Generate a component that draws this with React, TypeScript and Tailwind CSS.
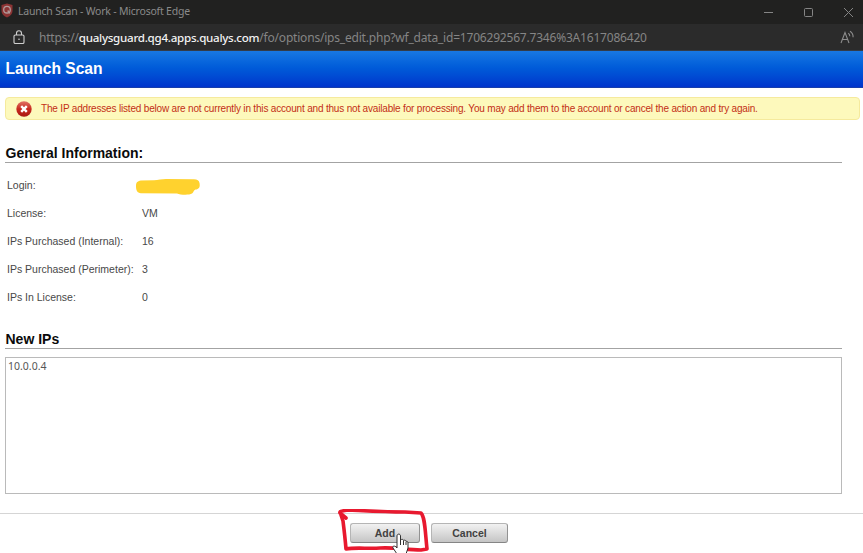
const rows = [
  { label: "Login:", value: "" },
  { label: "License:", value: "VM" },
  { label: "IPs Purchased (Internal):", value: "16" },
  { label: "IPs Purchased (Perimeter):", value: "3" },
  { label: "IPs In License:", value: "0" },
];

function TitleBar() {
  return (
    <div className="flex h-6 items-center bg-[#212120] pb-px font-['Noto_Sans',sans-serif] text-[#8a8a8a]">
      <svg className="mb-0.5 ml-px h-[15px] w-3 shrink-0" viewBox="0 0 12 15" fill="none">
        <path d="M6 .5 11.500 2V8c0 2.900-2 5.100-5.500 6.500C2.500 13.100.5 10.900.5 8V2Z" fill="#8c3434" />
        <circle cx="6" cy="6.700" r="3.300" stroke="#b09a9a" strokeWidth="1.300" />
        <path d="m6.700 7.500 2 2.800" stroke="#b09a9a" strokeWidth="1.300" />
      </svg>
      <span className="ml-[5px] whitespace-nowrap text-[10.500px] leading-none tracking-[-0.21px]">
        Launch Scan - Work - Microsoft Edge
      </span>
      <svg className="ml-auto h-3 w-[92px] shrink-0" viewBox="0 0 92 12" fill="none" stroke="#858585">
        <path d="M1 6.500h9" />
        <rect x="41.500" y="2.500" width="8" height="8" rx="1" />
        <path d="m81 2 9 9M90 2l-9 9" />
      </svg>
      <span className="w-2 shrink-0" />
    </div>
  );
}

function AddressBar() {
  return (
    <div className="flex h-[27px] items-center border-b border-[#333c49] bg-[#2b2b2b] font-['Noto_Sans',sans-serif] text-[#858585]">
      <svg className="ml-[13px] h-[15px] w-3 shrink-0" viewBox="0 0 12 15" fill="none" stroke="#d0d0d0" strokeWidth="1.100">
        <rect x="1" y="5" width="10" height="8.500" rx="1.300" />
        <path d="M3.500 5V3.300a2.500 2.500 0 0 1 5 0V5" />
        <circle cx="6" cy="9.300" r=".8" fill="#d0d0d0" stroke="none" />
      </svg>
      <span className="ml-[14px] pt-px whitespace-nowrap text-[12px] leading-none tracking-[-0.2px]">
        https://
        <span className="text-[11.600px] font-medium tracking-[-0.27px] text-[#f2f2f2]">
          qualysguard.qg4.apps.qualys.com
        </span>
        /fo/options/ips_edit.php?wf_data_id=1706292567.7346%3A1617086420
      </span>
      <svg className="mr-2 ml-auto h-[15px] w-[15px] shrink-0" viewBox="0 0 15 15" fill="none" stroke="#8d8d8d" strokeWidth="1.100">
        <path d="m1 13 4-10.500L9 13M2.500 9.500h5" />
        <path d="M8.300 3.300c1 .7 1.500 1.800 1.500 3M10 1.200c2.300 1.500 3.200 3.500 3.100 6" />
      </svg>
    </div>
  );
}

function Alert() {
  return (
    <div className="mt-[9px] mr-[3px] ml-[5px] flex h-[23px] items-center rounded-[4px] border border-[#f5ea9d] bg-[#fdf9bc]">
      <svg className="ml-2.5 h-4 w-4 shrink-0" viewBox="0 0 16 16">
        <defs>
          <linearGradient id="error" x1="0" y1="0" x2="0" y2="1">
            <stop stopColor="#e17466" />
            <stop offset=".5" stopColor="#c8291e" />
            <stop offset="1" stopColor="#a91812" />
          </linearGradient>
        </defs>
        <circle cx="8" cy="8" r="7.700" fill="url(#error)" />
        <path d="m5.200 5.200 5.600 5.600m0-5.600-5.600 5.600" stroke="#fff" strokeWidth="2.400" />
      </svg>
      <span className="ml-[9px] whitespace-nowrap text-[10px] leading-none tracking-[-0.181px] text-[#c32f16]">
        The IP addresses listed below are not currently in this account and thus not available for processing. You may
        add them to the account or cancel the action and try again.
      </span>
    </div>
  );
}

function Heading({ children }: { children: string }) {
  return (
    <h2 className="mr-[21px] ml-[5px] h-[18px] border-b border-[#a3a3a3] pl-[0.5px] text-[14px] leading-[17px] font-bold text-[#0b0b0b]">
      {children}
    </h2>
  );
}

const buttonClass =
  "h-5 rounded-[3px] border border-[#b5b5b5] border-r-[#929292] border-b-[#858585] bg-linear-to-b from-[#f2f2f2] to-[#c5c5c5] text-[10.500px] leading-none font-bold text-[#424242]";

export default function App() {
  return (
    <div className="flex h-[553px] w-[863px] flex-col overflow-hidden bg-white font-['Liberation_Sans',Arial,sans-serif]">
      <TitleBar />
      <AddressBar />
      <h1 className="h-[37px] border-b border-[#183eab] bg-linear-to-b from-[#1978e3] to-[#0034cc] pl-[5.500px] text-[15.600px] leading-[35px] font-bold text-white">
        Launch Scan
      </h1>
      <Alert />
      <div className="h-[25px]" />
      <Heading>General Information:</Heading>
      <dl className="mt-[9px] ml-[7px] text-[10.500px] text-[#484848]">
        {rows.map((row) => (
          <div key={row.label} className="flex h-7 items-center">
            <dt className="w-[135px] whitespace-nowrap">{row.label}</dt>
            <dd>
              {row.value || (
                <svg className="mt-[2px] -ml-1.5 block h-4 w-16" viewBox="0 0 64 16">
                  <path
                    d="M5 1.500C1 2 0 4 0 7c0 4 1 7 5 7.300l36 .1c3 1.500 12 2 15 .2 2-1 1-3 3.500-4C64 10 64 7 63.500 4 63 1 61 0 57 .2L30 0c-4 0-8 1.200-12 1.200Z"
                    fill="#ffd22e"
                  />
                </svg>
              )}
            </dd>
          </div>
        ))}
      </dl>
      <div className="h-[19px]" />
      <Heading>New IPs</Heading>
      <textarea
        readOnly
        value="10.0.0.4"
        className="mt-2 mr-[21px] ml-[5px] h-[137px] resize-none border border-[#bababa] bg-white px-0.5 py-[2px] font-['Noto_Sans',sans-serif] text-[10.500px] leading-3 text-[#555] outline-none"
      />
      <div className="mt-[19px] h-px bg-[#d5d5d5]" />
      <div className="relative mt-[9px] ml-[350px] flex gap-[11px]">
        <button className={buttonClass + " w-[70px]"}>Add</button>
        <button className={buttonClass + " w-[77px]"}>Cancel</button>
        <svg className="absolute -top-[14px] -left-[13px] h-[44px] w-[94px]" viewBox="337 509 94 44" fill="none">
          <path
            d="m346 518-6-5c-1-2 3-2 8-3 21 1 37 2 57 2l16 1c4 4 4 17 6 36l-6 1c-15 0-26-3-41-2-12 1-24-1-34 1-1-12-2-20-3-28l-2-6"
            stroke="#e8192f"
            strokeWidth="3.600"
            strokeLinecap="round"
            strokeLinejoin="round"
          />
          <path
            d="M397 554l-4-6c-1-2 2-3 4 0v-12c0-2.500 3.500-2.500 3.500 0v4c1-1 3-.8 3 .5 1-.7 2.500-.3 2.500 1 1-.5 2 0 2 1.500v5l-2 6Z"
            fill="#fff"
            stroke="#303030"
          />
          <path d="M400.500 540v5m3-4v4m2.500-3v3" stroke="#303030" />
        </svg>
      </div>
    </div>
  );
}
